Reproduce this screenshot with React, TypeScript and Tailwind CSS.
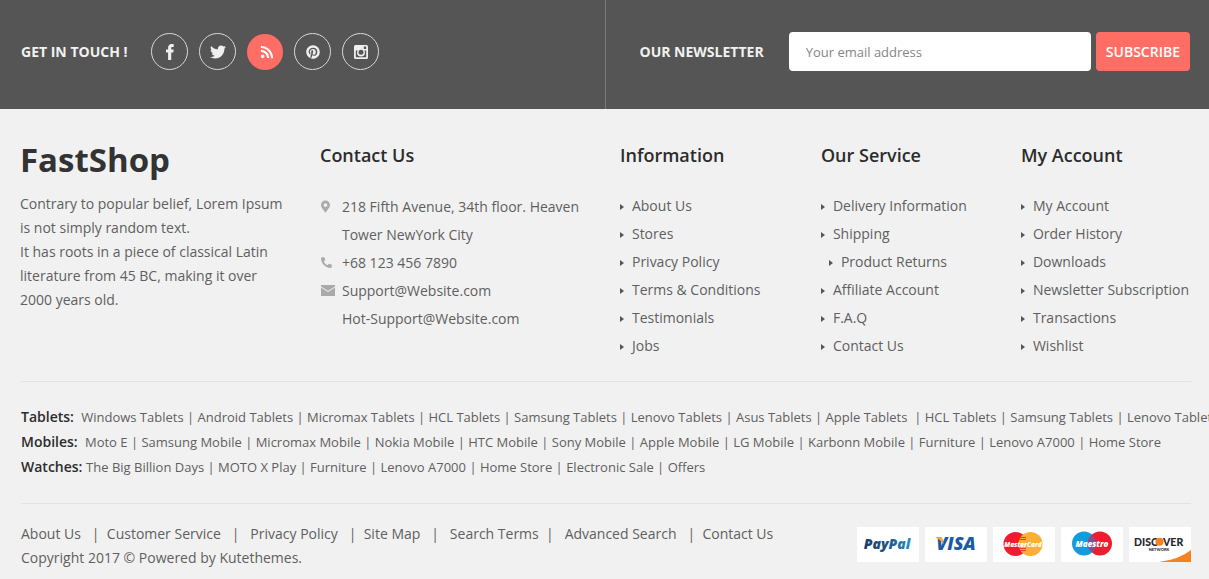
import React from "react";
import { FaTwitter, FaRss, FaPinterest, FaMapMarkerAlt, FaPhone } from "react-icons/fa";

type Row = { label: string; gap: string; entries: string[] };

const information = ["About Us", "Stores", "Privacy Policy", "Terms & Conditions", "Testimonials", "Jobs"];
const service = ["Delivery Information", "Shipping", "Product Returns", "Affiliate Account", "F.A.Q", "Contact Us"];
const account = ["My Account", "Order History", "Downloads", "Newsletter Subscription", "Transactions", "Wishlist"];

const rows: Row[] = [
  {
    label: "Tablets:",
    gap: "  ",
    entries: [
      "Windows Tablets", "Android Tablets", "Micromax Tablets", "HCL Tablets", "Samsung Tablets", "Lenovo Tablets",
      "Asus Tablets", "Apple Tablets ", "HCL Tablets", "Samsung Tablets", "Lenovo Tablets",
    ],
  },
  {
    label: "Mobiles:",
    gap: "  ",
    entries: [
      "Moto E", "Samsung Mobile", "Micromax Mobile", "Nokia Mobile", "HTC Mobile", "Sony Mobile", "Apple Mobile",
      "LG Mobile", "Karbonn Mobile", "Furniture", "Lenovo A7000", "Home Store",
    ],
  },
  {
    label: "Watches:",
    gap: " ",
    entries: ["The Big Billion Days", "MOTO X Play", "Furniture", "Lenovo A7000", "Home Store", "Electronic Sale", "Offers"],
  },
];

const legal: [string, string][] = [
  ["About Us", "   |  "],
  ["Customer Service", "   |   "],
  ["Privacy Policy", "   |  "],
  ["Site Map", "   |   "],
  ["Search Terms", "  |   "],
  ["Advanced Search", "   |  "],
  ["Contact Us", ""],
];

function FacebookIcon() {
  return (
    <svg viewBox="0 0 8 16" className="h-4 w-2" aria-hidden="true">
      <path fill="currentColor" d="M7.700.200v2.700H6.300c-.9 0-1.100.5-1.100 1.200v1.500h2.500l-.4 2.900H5.200V16H2.100V8.500H0V5.600h2.100V3.700C2.100 1.400 3.500 0 5.600 0c1 0 1.800.1 2.100.2Z" />
    </svg>
  );
}

function InstagramIcon() {
  return (
    <svg viewBox="0 0 14 14" className="size-3.5" aria-hidden="true">
      <rect width="14" height="14" rx="1.500" fill="currentColor" />
      <path fill="#555" d="M9.800 1.500h2.400v2.400H9.800ZM1.800 5.400h2A4 4 0 0 0 3 7.600a4 4 0 0 0 8 0 4 4 0 0 0-.8-2.200h2v6.800H1.800Z" />
      <circle cx="7" cy="7.200" r="2.500" fill="#555" />
    </svg>
  );
}

function EnvelopeIcon() {
  return (
    <svg viewBox="0 0 14 11" className="h-[11px] w-3.5" aria-hidden="true">
      <path fill="currentColor" d="M0 0h14v1.600L7 6 0 1.600ZM0 2.600l7 4.400 7-4.400V11H0Z" />
    </svg>
  );
}

const ring = "flex size-[37px] items-center justify-center rounded-full border border-[#d8d8d8] text-[#efefef]";

function LinkColumn({ title, links, indented }: { title: string; links: string[]; indented?: string }) {
  return (
    <nav aria-label={title}>
      <h2 className="text-lg leading-7 font-semibold text-[#2c2c2c]">{title}</h2>
      <ul className="mt-[23px]">
        {links.map((l) => (
          <li key={l} className={l === indented ? "pl-2" : ""}>
            <a href="#" className="flex items-center gap-2 whitespace-nowrap text-sm leading-7">
              <svg viewBox="0 0 4 6" className="mt-0.5 h-1.5 w-1 shrink-0" aria-hidden="true">
                <path d="M0 0l4 3-4 3Z" fill="#555" />
              </svg>
              {l}
            </a>
          </li>
        ))}
      </ul>
    </nav>
  );
}

function Card({ name, children }: { name: string; children: React.ReactNode }) {
  return (
    <svg viewBox="0 0 62 35" role="img" aria-label={name} className="h-[35px] w-[62px] bg-white">
      {children}
    </svg>
  );
}

function Payments() {
  return (
    <div className="flex shrink-0 gap-1.5">
      <Card name="PayPal">
        <defs>
          <linearGradient id="pp" x1="0" x2="1">
            <stop offset="0" stopColor="#1b3d66" />
            <stop offset="0.5" stopColor="#1f5687" />
            <stop offset="1" stopColor="#2790c3" />
          </linearGradient>
        </defs>
        <text x="30" y="22" textAnchor="middle" fontSize="14" fontWeight="800" fontStyle="italic" fontFamily="Open Sans, sans-serif" fill="url(#pp)">PayPal</text>
      </Card>
      <Card name="Visa">
        <text x="31" y="23" textAnchor="middle" fontSize="18" fontWeight="800" fontStyle="italic" fontFamily="Open Sans, sans-serif" fill="#1a5ba6">VISA</text>
        <path d="M10.500 10h5.300q1.300 0 1.700 1.500l1 5.500Q15.500 12.500 10.500 10.500Z" fill="#f0a63a" />
      </Card>
      <Card name="MasterCard">
        <circle cx="22.500" cy="17" r="12" fill="#ee1c2e" />
        <circle cx="37.500" cy="17" r="12" fill="#fbb034" />
        <path d="M27 10.500h6M26 12.500h7M26 21.500h7M27 23.500h6" stroke="#ee1c2e" strokeWidth="0.8" />
        <text x="30" y="19.500" textAnchor="middle" fontSize="6.500" fontWeight="800" fontStyle="italic" fontFamily="Open Sans, sans-serif" fill="#fff">MasterCard</text>
      </Card>
      <Card name="Maestro">
        <circle cx="23" cy="16.500" r="12" fill="#109ddb" />
        <circle cx="39" cy="16.500" r="12" fill="#ee1c2e" />
        <path d="M31 7.600a12 12 0 0 1 0 17.800 12 12 0 0 1 0-17.800Z" fill="#8d4b8f" />
        <text x="31" y="19.500" textAnchor="middle" fontSize="8" fontWeight="800" fontStyle="italic" fontFamily="Open Sans, sans-serif" fill="#fff">Maestro</text>
      </Card>
      <Card name="Discover Network">
        <path d="M30 35Q50 32.500 62 23v12Z" fill="#f58220" />
        <g fontFamily="Lato, sans-serif" fontWeight="900" fill="#27262b">
          <text x="5" y="18.500" fontSize="10.500">DISC</text>
          <circle cx="30.500" cy="14.800" r="4" fill="#f58220" />
          <text x="34" y="18.500" fontSize="10.500">VER</text>
          <text x="30" y="23.500" fontSize="4" textAnchor="middle">NETWORK</text>
        </g>
      </Card>
    </div>
  );
}

export default function App() {
  return (
    <footer className="min-h-screen overflow-hidden bg-[#f1f1f1] font-['Open_Sans',sans-serif] text-sm text-[#5f5f5f]">
      <div className="grid grid-cols-2 bg-[#555555] text-[#f1f1f1]">
        <div className="flex items-start gap-6 pt-8 pb-9 pl-[21px]">
          <h2 className="text-sm leading-10 font-bold">GET IN TOUCH !</h2>
          <ul className="flex items-end gap-[11px] pt-px">
            <li><a href="#" aria-label="Facebook" className={ring}><FacebookIcon /></a></li>
            <li><a href="#" aria-label="Twitter" className={ring}><FaTwitter className="size-4" /></a></li>
            <li>
              <a href="#" aria-label="RSS" className="flex size-9 items-center justify-center rounded-full bg-[#ff6e65] pl-1 text-white">
                <FaRss className="size-3.5" />
              </a>
            </li>
            <li><a href="#" aria-label="Pinterest" className={ring}><FaPinterest className="size-3.5" /></a></li>
            <li><a href="#" aria-label="Instagram" className={ring}><InstagramIcon /></a></li>
          </ul>
        </div>
        <form
          className="flex items-center border-l border-[#7b7b7b] pt-8 pr-[19px] pb-[38px] pl-[34px]"
          onSubmit={(e) => e.preventDefault()}
        >
          <label htmlFor="email" className="text-sm font-bold whitespace-nowrap">OUR NEWSLETTER</label>
          <input
            id="email"
            type="email"
            placeholder="Your email address"
            className="ml-[25px] h-[39px] min-w-0 flex-1 rounded bg-white px-[17px] text-[13px] text-[#555] placeholder:text-[#858585]"
          />
          <button type="submit" className="ml-[5px] h-[39px] rounded bg-[#ff6e65] px-2.5 text-sm font-semibold text-white">SUBSCRIBE</button>
        </form>
      </div>

      <div className="grid grid-cols-[300fr_300fr_201fr_200fr_168fr] px-5 pt-8 pb-[21px]">
        <div>
          <a href="#" className="block text-[33px] leading-[38px] font-bold text-[#333]">FastShop</a>
          <p className="mt-[13px] max-w-[270px] leading-6">
            Contrary to popular belief, Lorem Ipsum is not simply random text.
            <br />
            It has roots in a piece of classical Latin literature from 45 BC, making it over 2000 years old.
          </p>
        </div>
        <div>
          <h2 className="text-lg leading-7 font-semibold text-[#2c2c2c]">Contact Us</h2>
          <address className="mt-6 leading-7 not-italic">
            <div className="flex gap-[7px]">
              <span className="flex h-[26px] w-[15px] items-center pl-px text-[#aaa]"><FaMapMarkerAlt className="h-[13px] w-[9px]" /></span>
              <p>218 Fifth Avenue, 34th floor. Heaven<br />Tower NewYork City</p>
            </div>
            <div className="flex gap-[7px]">
              <span className="flex h-[26px] w-[15px] items-center pl-px text-[#aaa]"><FaPhone className="size-[11px] -scale-x-100" /></span>
              <p>+68 123 456 7890</p>
            </div>
            <div className="flex gap-[7px]">
              <span className="flex h-[26px] w-[15px] items-center pl-px text-[#aaa]"><EnvelopeIcon /></span>
              <p><a href="#">Support@Website.com</a><br /><a href="#">Hot-Support@Website.com</a></p>
            </div>
          </address>
        </div>
        <LinkColumn title="Information" links={information} />
        <LinkColumn title="Our Service" links={service} indented="Product Returns" />
        <LinkColumn title="My Account" links={account} />
      </div>

      <div className="ml-[21px] mr-[18px] border-t border-[#e3e3e3]" />

      <div className="py-[23px] pl-[21px] text-[13px] leading-[25px] whitespace-pre">
        {rows.map((r) => (
          <p key={r.label}>
            <span className="text-sm leading-5 font-semibold text-[#2c2c2c]">{r.label}{r.gap}</span>
            {r.entries.map((e, i) => (
              <React.Fragment key={i}>
                {i > 0 && " | "}
                <a href="#">{e}</a>
              </React.Fragment>
            ))}
          </p>
        ))}
      </div>

      <div className="ml-[21px] mr-[18px] flex items-start justify-between border-t border-[#e3e3e3] pt-[18px]">
        <div className="leading-6">
          <p className="whitespace-pre">
            {legal.map(([l, sep]) => (
              <React.Fragment key={l}>
                <a href="#">{l}</a>
                {sep}
              </React.Fragment>
            ))}
          </p>
          <p>Copyright 2017 © Powered by Kutethemes.</p>
        </div>
        <div className="pt-[5px]">
          <Payments />
        </div>
      </div>
    </footer>
  );
}
